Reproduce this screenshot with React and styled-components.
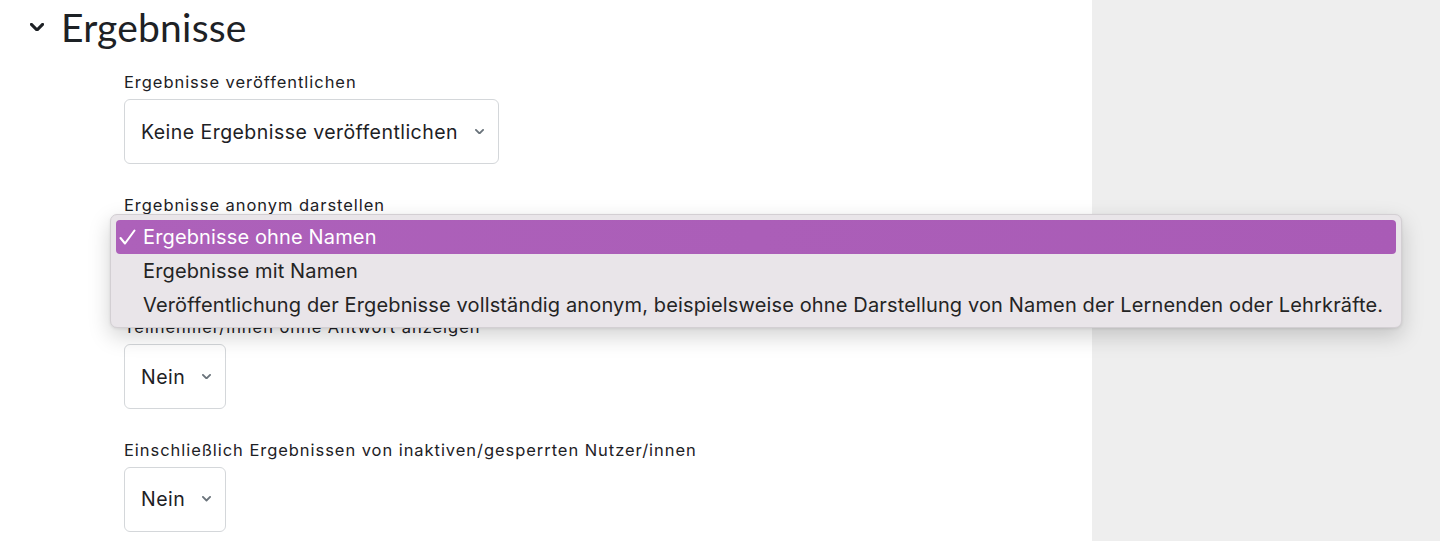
import React from 'react';
import styled, { createGlobalStyle } from 'styled-components';

const Global = createGlobalStyle`
  html, body {
    margin: 0;
    padding: 0;
    background: #ffffff;
  }
  body {
    font-family: Inter, "Noto Sans", sans-serif;
    color: #1d2125;
  }
`;

const Page = styled.div`
  display: flex;
  width: 1440px;
  height: 541px;
  overflow: hidden;
`;

const Main = styled.div`
  width: 1092px;
  flex-shrink: 0;
  background: #ffffff;
`;

const Sidebar = styled.div`
  flex: 1;
  background: #eeeeee;
`;

const SectionHead = styled.div`
  display: flex;
  align-items: center;
  height: 54px;
  padding-left: 30px;
  gap: 17px;
`;

const Heading = styled.h3`
  margin: 0;
  font-family: Lato, "Noto Sans", sans-serif;
  font-weight: 400;
  font-size: 39px;
  color: #1d2125;
  letter-spacing: 0.2px;
`;

const Fields = styled.div`
  display: flex;
  flex-direction: column;
  gap: 28.5px;
  padding: 16px 0 0 124px;
`;

const Field = styled.div`
  position: relative;
  display: flex;
  flex-direction: column;
  align-items: flex-start;
`;

const Label = styled.div`
  font-size: 16.5px;
  letter-spacing: 0.95px;
  line-height: 24px;
  margin-bottom: 5px;
  color: #1d2125;
  white-space: nowrap;
`;

const SelectBox = styled.div`
  box-sizing: border-box;
  height: 65px;
  display: flex;
  align-items: center;
  gap: 17px;
  padding: 0 14px 0 16px;
  border: 1px solid #d4d7da;
  border-radius: 6px;
  background: #ffffff;
  font-size: 19.5px;
  letter-spacing: 0.45px;
  color: #1d2125;
  white-space: nowrap;
`;

const Menu = styled.div`
  position: absolute;
  left: -14px;
  top: 21.5px;
  width: 1292px;
  box-sizing: border-box;
  padding: 5px 5px;
  background: #e9e5e9;
  border: 1px solid #d3cfd3;
  border-radius: 7px;
  box-shadow: 0 8px 22px rgba(0, 0, 0, 0.18), 0 1px 3px rgba(0, 0, 0, 0.08);
  z-index: 10;
`;

const Option = styled.div`
  position: relative;
  height: 34px;
  display: flex;
  align-items: center;
  padding-left: 27px;
  border-radius: 4px;
  font-family: Inter, "Noto Sans", sans-serif;
  font-size: 20px;
  letter-spacing: 0.14px;
  white-space: nowrap;
  color: ${p => (p.$active ? '#ffffff' : '#242424')};
  background: ${p => (p.$active ? 'linear-gradient(90deg, #ad61ba, #a95bb6)' : 'transparent')};
`;

const Check = styled.span`
  position: absolute;
  left: 2px;
  top: 50%;
  transform: translateY(-50%);
  display: flex;
`;

const Chevron = ({ size = 9, color = '#6a737b', width = 2 }) => (
  <svg width={size} height={size * 0.6} viewBox="0 0 10 6" fill="none">
    <path d="M1 1l4 4 4-4" stroke={color} strokeWidth={width} strokeLinecap="round" strokeLinejoin="round" />
  </svg>
);

const CheckMark = () => (
  <svg width="19" height="17" viewBox="0 0 19 17" fill="none">
    <path d="M2.5 9.5l4.5 5.5L16.5 2" stroke="#ffffff" strokeWidth="2.1" strokeLinecap="round" strokeLinejoin="round" />
  </svg>
);

const options = [
  'Ergebnisse ohne Namen',
  'Ergebnisse mit Namen',
  'Veröffentlichung der Ergebnisse vollständig anonym, beispielsweise ohne Darstellung von Namen der Lernenden oder Lehrkräfte.',
];

const Select = ({ value }) => (
  <SelectBox>
    <span>{value}</span>
    <Chevron />
  </SelectBox>
);

export default function App() {
  return (
    <>
      <Global />
      <Page>
        <Main>
          <SectionHead>
            <Chevron size={14} color="#1d2125" width={2.2} />
            <Heading>Ergebnisse</Heading>
          </SectionHead>
          <Fields>
            <Field>
              <Label>Ergebnisse veröffentlichen</Label>
              <Select value="Keine Ergebnisse veröffentlichen" />
            </Field>
            <Field>
              <Label>Ergebnisse anonym darstellen</Label>
              <Select value="Ergebnisse ohne Namen" />
              <Menu>
                {options.map((o, i) => (
                  <Option key={o} $active={i === 0}>
                    {i === 0 && (
                      <Check>
                        <CheckMark />
                      </Check>
                    )}
                    {o}
                  </Option>
                ))}
              </Menu>
            </Field>
            <Field>
              <Label>Teilnehmer/innen ohne Antwort anzeigen</Label>
              <Select value="Nein" />
            </Field>
            <Field>
              <Label>Einschließlich Ergebnissen von inaktiven/gesperrten Nutzer/innen</Label>
              <Select value="Nein" />
            </Field>
          </Fields>
        </Main>
        <Sidebar />
      </Page>
    </>
  );
}
